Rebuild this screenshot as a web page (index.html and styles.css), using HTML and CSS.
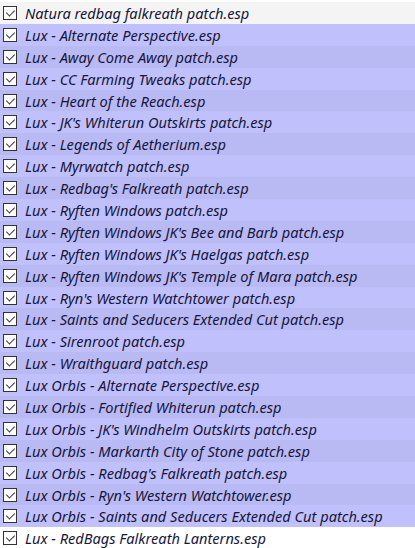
FILE: index.html
```html
<!DOCTYPE html>
<html lang="en">
<head>
    <meta charset="UTF-8">
    <title>Plugin list</title>
    <link rel="stylesheet" href="styles.css">
</head>
<body>
    <ul class="plugin-list">
        <li class="plugin first"><span class="check"></span><span class="name">Natura redbag falkreath patch.esp</span></li>
        <li class="plugin"><span class="check"></span><span class="name">Lux - Alternate Perspective.esp</span></li>
        <li class="plugin"><span class="check"></span><span class="name">Lux - Away Come Away patch.esp</span></li>
        <li class="plugin"><span class="check"></span><span class="name">Lux - CC Farming Tweaks patch.esp</span></li>
        <li class="plugin"><span class="check"></span><span class="name">Lux - Heart of the Reach.esp</span></li>
        <li class="plugin"><span class="check"></span><span class="name">Lux - JK's Whiterun Outskirts patch.esp</span></li>
        <li class="plugin"><span class="check"></span><span class="name">Lux - Legends of Aetherium.esp</span></li>
        <li class="plugin"><span class="check"></span><span class="name">Lux - Myrwatch patch.esp</span></li>
        <li class="plugin"><span class="check"></span><span class="name">Lux - Redbag's Falkreath patch.esp</span></li>
        <li class="plugin"><span class="check"></span><span class="name">Lux - Ryften Windows patch.esp</span></li>
        <li class="plugin"><span class="check"></span><span class="name">Lux - Ryften Windows JK's Bee and Barb patch.esp</span></li>
        <li class="plugin"><span class="check"></span><span class="name">Lux - Ryften Windows JK's Haelgas patch.esp</span></li>
        <li class="plugin"><span class="check"></span><span class="name">Lux - Ryften Windows JK's Temple of Mara patch.esp</span></li>
        <li class="plugin"><span class="check"></span><span class="name">Lux - Ryn's Western Watchtower patch.esp</span></li>
        <li class="plugin"><span class="check"></span><span class="name">Lux - Saints and Seducers Extended Cut patch.esp</span></li>
        <li class="plugin"><span class="check"></span><span class="name">Lux - Sirenroot patch.esp</span></li>
        <li class="plugin"><span class="check"></span><span class="name">Lux - Wraithguard patch.esp</span></li>
        <li class="plugin"><span class="check"></span><span class="name">Lux Orbis - Alternate Perspective.esp</span></li>
        <li class="plugin"><span class="check"></span><span class="name">Lux Orbis - Fortified Whiterun patch.esp</span></li>
        <li class="plugin"><span class="check"></span><span class="name">Lux Orbis - JK's Windhelm Outskirts patch.esp</span></li>
        <li class="plugin"><span class="check"></span><span class="name">Lux Orbis - Markarth City of Stone patch.esp</span></li>
        <li class="plugin"><span class="check"></span><span class="name">Lux Orbis - Redbag's Falkreath patch.esp</span></li>
        <li class="plugin"><span class="check"></span><span class="name">Lux Orbis - Ryn's Western Watchtower.esp</span></li>
        <li class="plugin"><span class="check"></span><span class="name">Lux Orbis - Saints and Seducers Extended Cut patch.esp</span></li>
        <li class="plugin last"><span class="check"></span><span class="name">Lux - RedBags Falkreath Lanterns.esp</span></li>
    </ul>
</body>
</html>
```

FILE: styles.css
```css
* {
    box-sizing: border-box;
    margin: 0;
    padding: 0;
}

body {
    background: #fff;
    font-family: 'Noto Sans', 'Open Sans', sans-serif;
    overflow: hidden;
}

.plugin-list {
    list-style: none;
    padding-top: 2px;
}

.plugin {
    display: flex;
    align-items: center;
    height: 21.9px;
    padding-left: 3px;
    background-color: #c0c0fc;
}

.plugin:nth-child(odd) {
    background-color: #b9b9f4;
}

.plugin.first {
    background-color: #f4f4f4;
}

.plugin.last {
    background-color: #fff;
}

.check {
    position: relative;
    width: 14px;
    height: 14px;
    border: 1px solid #333;
    background: #fff;
    flex-shrink: 0;
}

/* tick mark */
.check::after {
    content: "";
    position: absolute;
    left: 3.5px;
    top: 1px;
    width: 4px;
    height: 7px;
    border-right: 1.2px solid #333;
    border-bottom: 1.2px solid #333;
    transform: rotate(45deg);
}

.name {
    margin-left: 8px;
    font-size: 14.6px;
    line-height: 18px;
    font-style: italic;
    color: #16163a;
    white-space: nowrap;
}
```
